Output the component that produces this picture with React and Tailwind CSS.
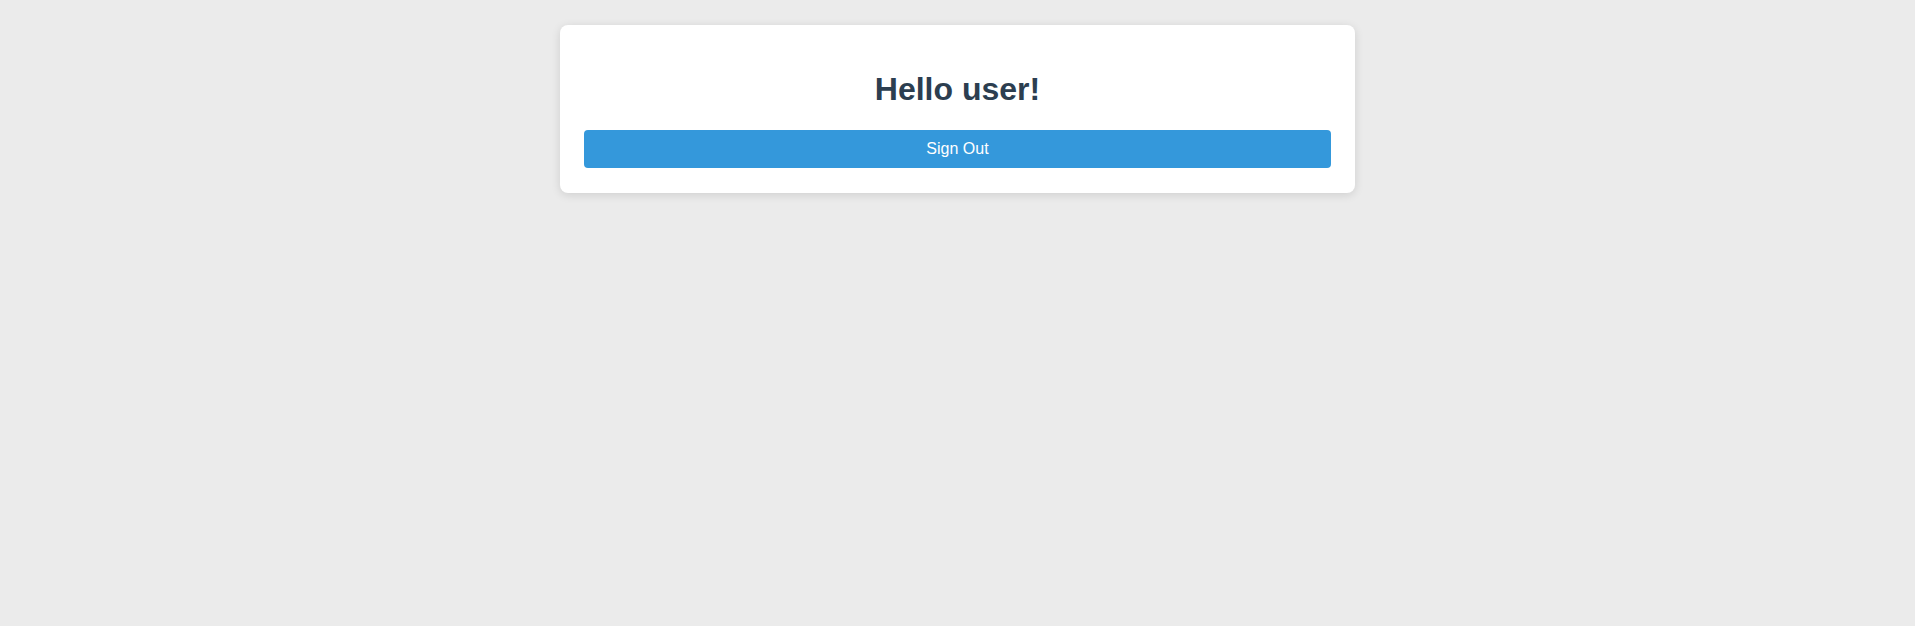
export default function App() {
  return (
    <div className="min-h-screen bg-[#ebebeb] pt-[25px]" style={{ fontFamily: '"Liberation Sans", Arial, sans-serif' }}>
      <div className="mx-auto w-[795px] rounded-lg bg-white px-6 pt-[46px] pb-[25px] shadow-[0_2px_10px_rgba(0,0,0,0.12)]">
        <h1 className="mb-[22px] text-center text-[32px] font-bold leading-[37px] text-[#2c3e50]">Hello user!</h1>
        <button className="flex h-[38px] w-full items-center justify-center rounded border-0 bg-[#3498db] text-[16px] text-white outline-none">
          Sign Out
        </button>
      </div>
    </div>
  );
}
